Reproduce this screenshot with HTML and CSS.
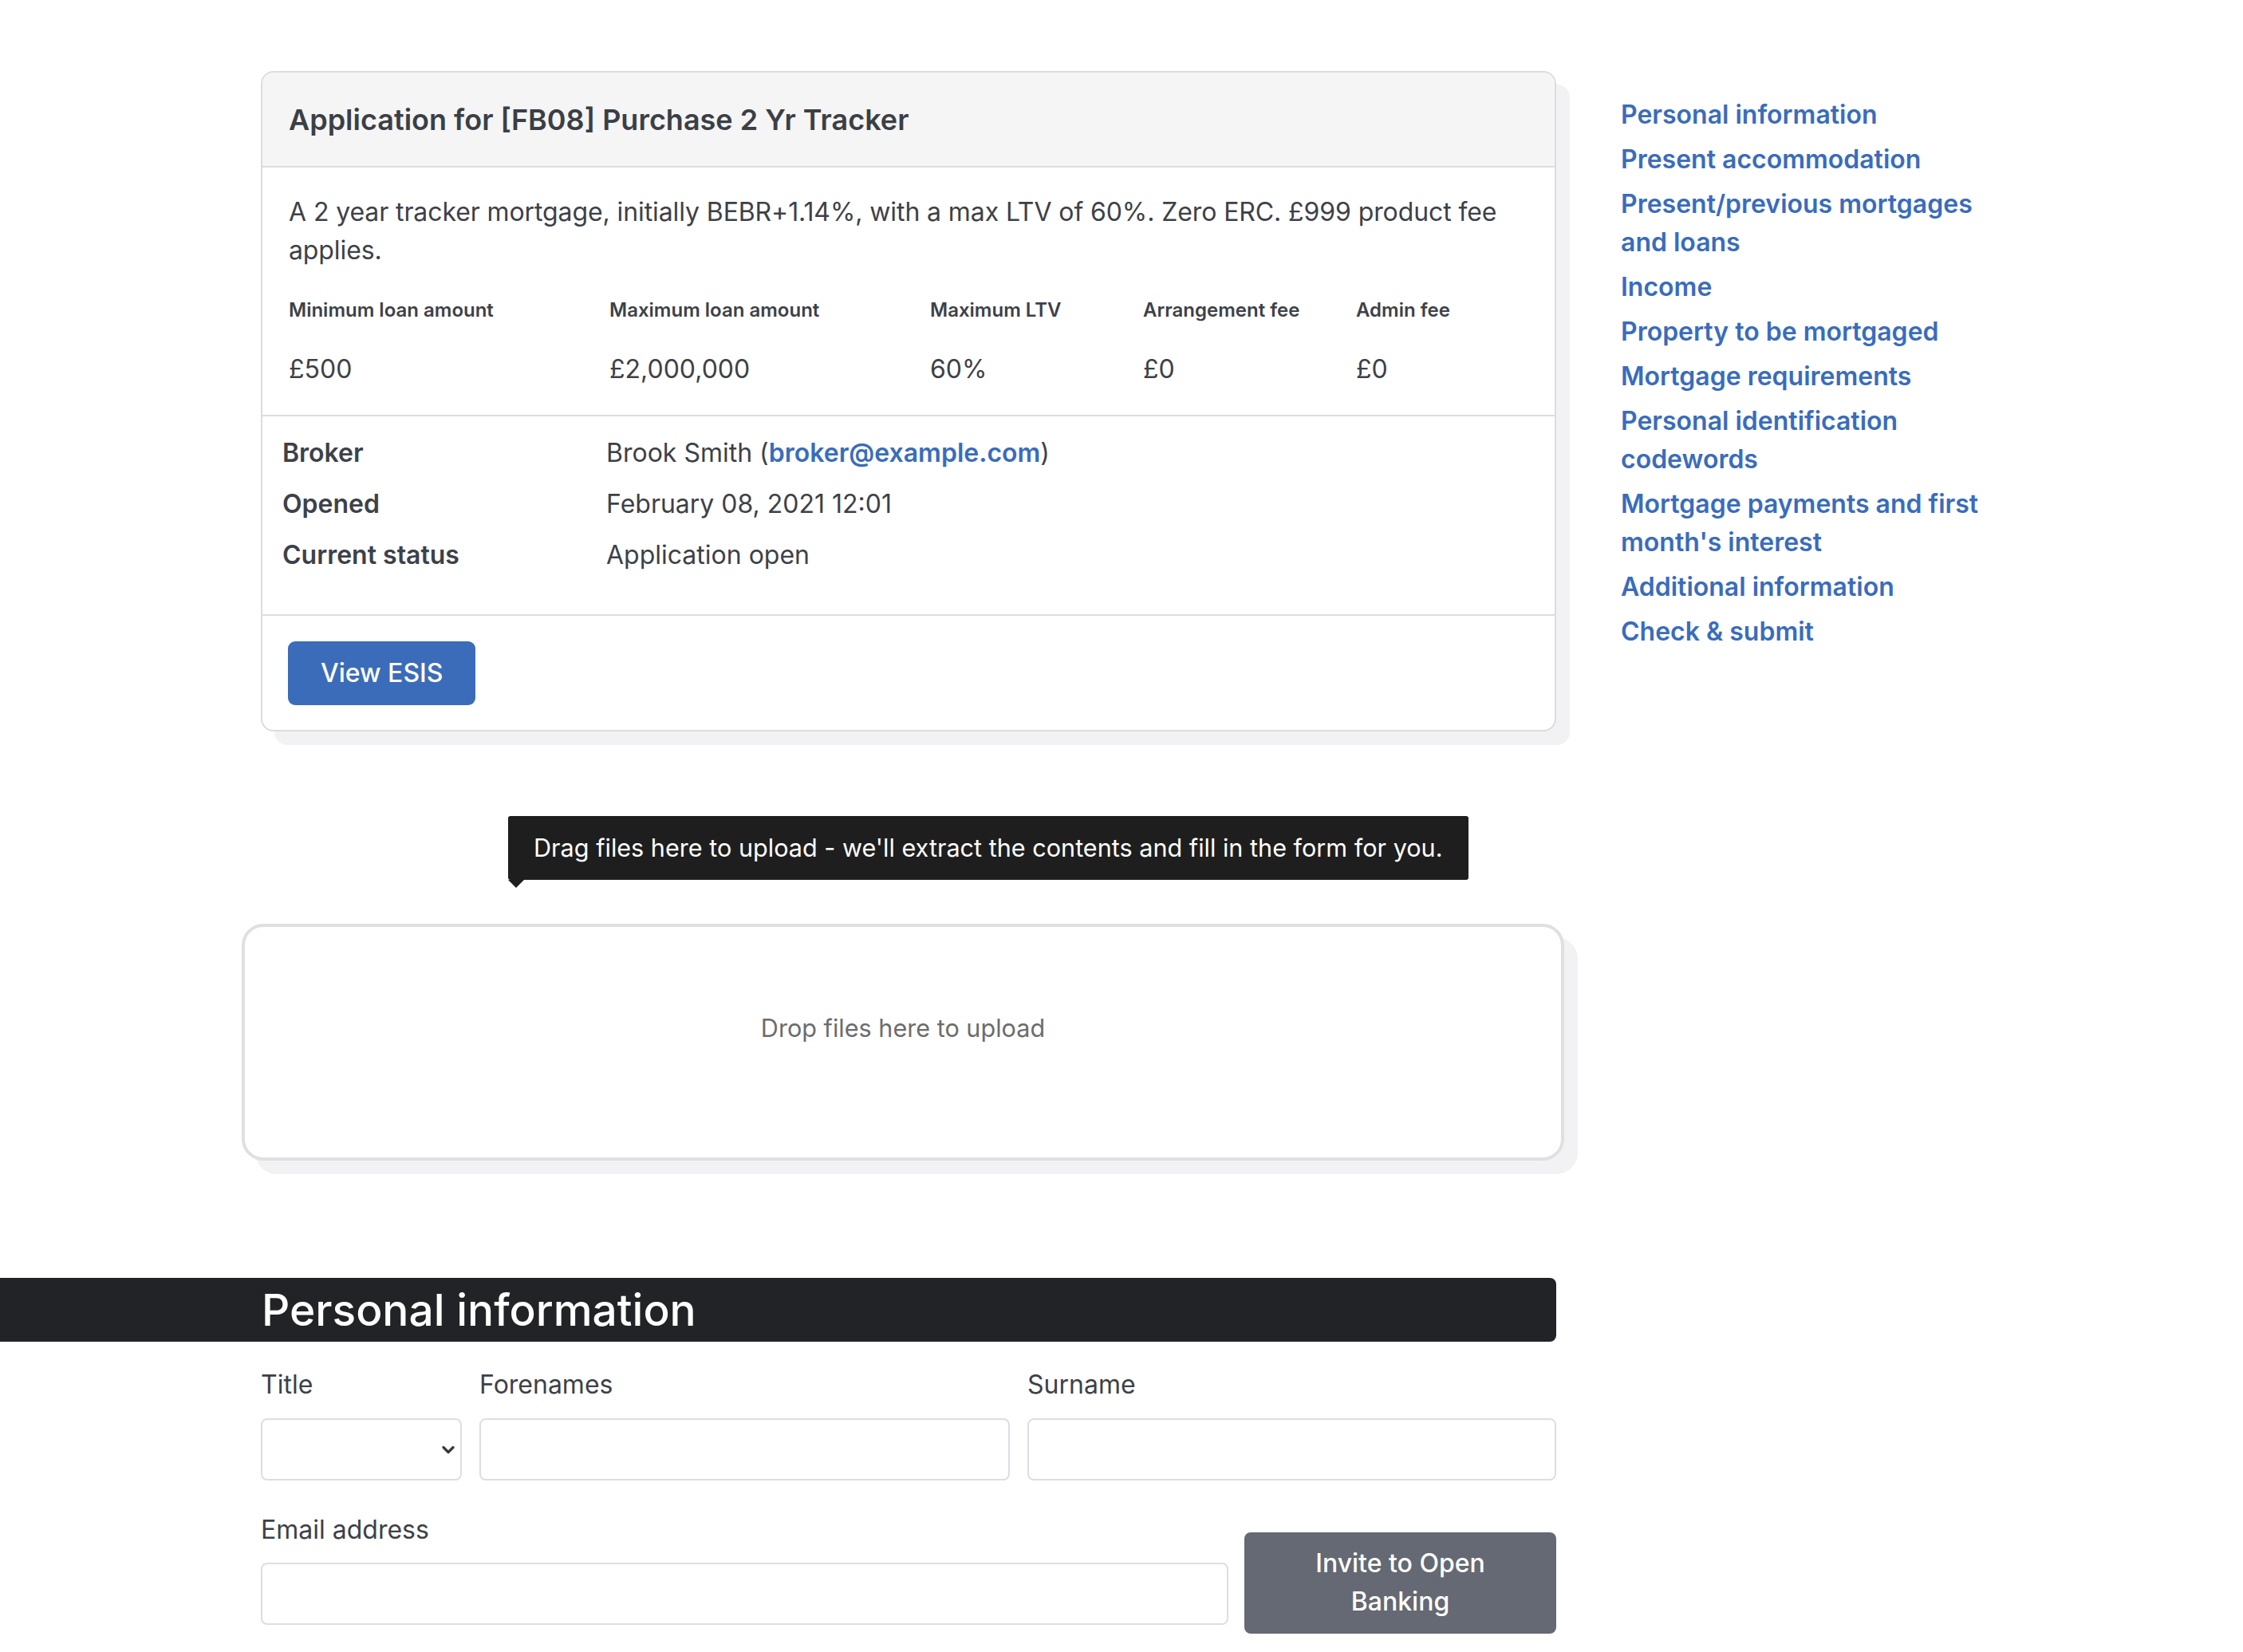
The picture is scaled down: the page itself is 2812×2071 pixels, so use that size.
FILE: index.html
```html
<!DOCTYPE html>
<html lang="en">
<head>
<meta charset="utf-8">
<title>Application for [FB08] Purchase 2 Yr Tracker</title>
<link rel="stylesheet" href="styles.css">
</head>
<body>
<div class="page">
  <main class="main">
    <section class="card">
      <div class="card-header">
        <h5 class="card-title">Application for [FB08] Purchase 2 Yr Tracker</h5>
      </div>
      <div class="card-body">
        <p class="desc">A 2 year tracker mortgage, initially BEBR+1.14%, with a max LTV of 60%. Zero ERC. £999 product fee applies.</p>
        <div class="terms">
          <div class="th">Minimum loan amount</div>
          <div class="th">Maximum loan amount</div>
          <div class="th">Maximum LTV</div>
          <div class="th">Arrangement fee</div>
          <div class="th">Admin fee</div>
          <div class="td">£500</div>
          <div class="td">£2,000,000</div>
          <div class="td">60%</div>
          <div class="td">£0</div>
          <div class="td">£0</div>
        </div>
      </div>
      <div class="card-details">
        <dl class="details">
          <dt>Broker</dt>
          <dd>Brook Smith (<a class="link" href="#">broker@example.com</a>)</dd>
          <dt>Opened</dt>
          <dd>February 08, 2021 12:01</dd>
          <dt>Current status</dt>
          <dd>Application open</dd>
        </dl>
      </div>
      <div class="card-footer">
        <a class="btn btn-primary" href="#">View ESIS</a>
      </div>
    </section>

    <div class="upload">
      <div class="tooltip">Drag files here to upload - we'll extract the contents and fill in the form for you.</div>
      <div class="dropzone"><span>Drop files here to upload</span></div>
    </div>

    <section class="form-section">
      <h2 class="section-head">Personal information</h2>
      <div class="form-row row-names">
        <div class="field">
          <label class="label">Title</label>
          <div class="select-wrap">
            <select class="input select"><option></option></select>
            <svg class="chevron" width="16" height="11" viewBox="0 0 16 11" aria-hidden="true"><path d="M2 2.5 L8 8.5 L14 2.5" fill="none" stroke="#343a40" stroke-width="3.2" stroke-linecap="round" stroke-linejoin="round"/></svg>
          </div>
        </div>
        <div class="field">
          <label class="label">Forenames</label>
          <input class="input" type="text">
        </div>
        <div class="field">
          <label class="label">Surname</label>
          <input class="input" type="text">
        </div>
      </div>
      <div class="form-row row-email">
        <div class="field">
          <label class="label">Email address</label>
          <input class="input" type="email">
        </div>
        <button class="btn btn-secondary" type="button">Invite to Open Banking</button>
      </div>
    </section>
  </main>

  <nav class="sidebar">
    <a href="#">Personal information</a>
    <a href="#">Present accommodation</a>
    <a href="#">Present/previous mortgages and loans</a>
    <a href="#">Income</a>
    <a href="#">Property to be mortgaged</a>
    <a href="#">Mortgage requirements</a>
    <a href="#">Personal identification codewords</a>
    <a href="#">Mortgage payments and first month's interest</a>
    <a href="#">Additional information</a>
    <a href="#">Check &amp; submit</a>
  </nav>
</div>
</body>
</html>
```

FILE: styles.css
```css
html, body {
  margin: 0;
  padding: 0;
  background: #ffffff;
}

body {
  font-family: Inter, "Noto Sans", "Liberation Sans", sans-serif;
  font-size: 32px;
  line-height: 48px;
  color: #3d4148;
  overflow: hidden;
}

* {
  box-sizing: border-box;
}

.page {
  display: flex;
  align-items: flex-start;
  gap: 81px;
  padding: 89px 0 0 327px;
}

.main {
  width: 1624px;
  flex: none;
}

/* ---------- Card ---------- */
.card {
  background: #ffffff;
  border: 2px solid #dcdcdc;
  border-radius: 16px;
  box-shadow: 17px 17px 0 #f2f2f4;
}

.card-header {
  background: #f5f5f5;
  border-bottom: 2px solid #dcdcdc;
  border-radius: 14px 14px 0 0;
  padding: 32px 33px 31px;
}

.card-title {
  margin: 0;
  font-size: 36px;
  line-height: 54px;
  font-weight: 600;
  color: #3b3f46;
}

.card-body {
  padding: 32px 33px 33px;
}

.desc {
  margin: 0 0 33px;
  letter-spacing: -0.1px;
}

.terms {
  display: grid;
  grid-template-columns: 402px 402px 267px 267px 1fr;
  row-gap: 32px;
}

.th {
  font-size: 24px;
  line-height: 36px;
  font-weight: 600;
}

.td {
  font-size: 32px;
  line-height: 48px;
}

.card-details {
  border-top: 2px solid #dcdcdc;
  padding: 22px 25px 50px;
}

.details {
  margin: 0;
  display: grid;
  grid-template-columns: 406px 1fr;
  row-gap: 16px;
}

.details dt {
  font-weight: 600;
}

.details dd {
  margin: 0;
}

.link {
  color: #3a6cbb;
  font-weight: 600;
  text-decoration: none;
}

.card-footer {
  border-top: 2px solid #dcdcdc;
  padding: 32px 32px 31px;
}

.btn {
  display: inline-block;
  font-family: inherit;
  font-size: 32px;
  line-height: 48px;
  font-weight: 500;
  color: #ffffff;
  text-decoration: none;
  border: none;
  border-radius: 9px;
  text-align: center;
}

.btn-primary {
  background: #3b6cb9;
  padding: 16px 41px;
}

/* ---------- Upload ---------- */
.upload {
  margin-top: 106px;
}

.tooltip {
  position: relative;
  width: fit-content;
  margin-left: 310px;
  background: #1e1e1e;
  color: #ffffff;
  font-size: 30.6px;
  line-height: 48px;
  padding: 16px 32px;
  border-radius: 3px;
}

.tooltip::after {
  content: "";
  position: absolute;
  left: 0;
  bottom: -10px;
  border-left: 10px solid transparent;
  border-right: 10px solid transparent;
  border-top: 10px solid #1e1e1e;
}

.dropzone {
  margin: 55px -10px 0 -24px;
  height: 297px;
  border: 4px solid #e0e0e0;
  border-radius: 27px;
  box-shadow: 17px 17px 0 #f2f2f4;
  display: flex;
  align-items: center;
  justify-content: center;
  padding-bottom: 36px;
  color: #6c6c6c;
  font-size: 30.6px;
  background: #ffffff;
}

/* ---------- Form ---------- */
.form-section {
  margin-top: 147px;
}

.section-head {
  margin: 0 0 0 -327px;
  padding-left: 328px;
  height: 80px;
  background: #212327;
  color: #ffffff;
  border-radius: 0 8px 8px 0;
  font-size: 55px;
  line-height: 80px;
  font-weight: 500;
}

.form-row {
  display: grid;
}

.row-names {
  margin-top: 30px;
  grid-template-columns: 252px 665px 1fr;
  column-gap: 22px;
}

.row-email {
  margin-top: 38px;
  grid-template-columns: 1fr 391px;
  column-gap: 20px;
  align-items: start;
}

.label {
  display: block;
  margin-bottom: 18px;
  line-height: 48px;
  color: #3d4148;
}

.row-email .label {
  margin-bottom: 17px;
}

.input {
  display: block;
  width: 100%;
  height: 78px;
  border: 2px solid #dcdee3;
  border-radius: 8px;
  background: #ffffff;
  font-family: inherit;
  font-size: 32px;
  padding: 0 20px;
  margin: 0;
}

.select-wrap {
  position: relative;
}

.select {
  appearance: none;
  -webkit-appearance: none;
}

.chevron {
  position: absolute;
  right: 9px;
  top: 34px;
  pointer-events: none;
}

.btn-secondary {
  margin-top: 27px;
  background: #646973;
  padding: 15px 60px 16px;
  border-radius: 8px;
  width: 100%;
}

/* ---------- Sidebar ---------- */
.sidebar {
  width: 480px;
  flex: none;
  padding-top: 31px;
  display: flex;
  flex-direction: column;
  gap: 8px;
}

.sidebar a {
  color: #3a6cbb;
  font-weight: 600;
  font-size: 32px;
  line-height: 48px;
  text-decoration: none;
}
```
